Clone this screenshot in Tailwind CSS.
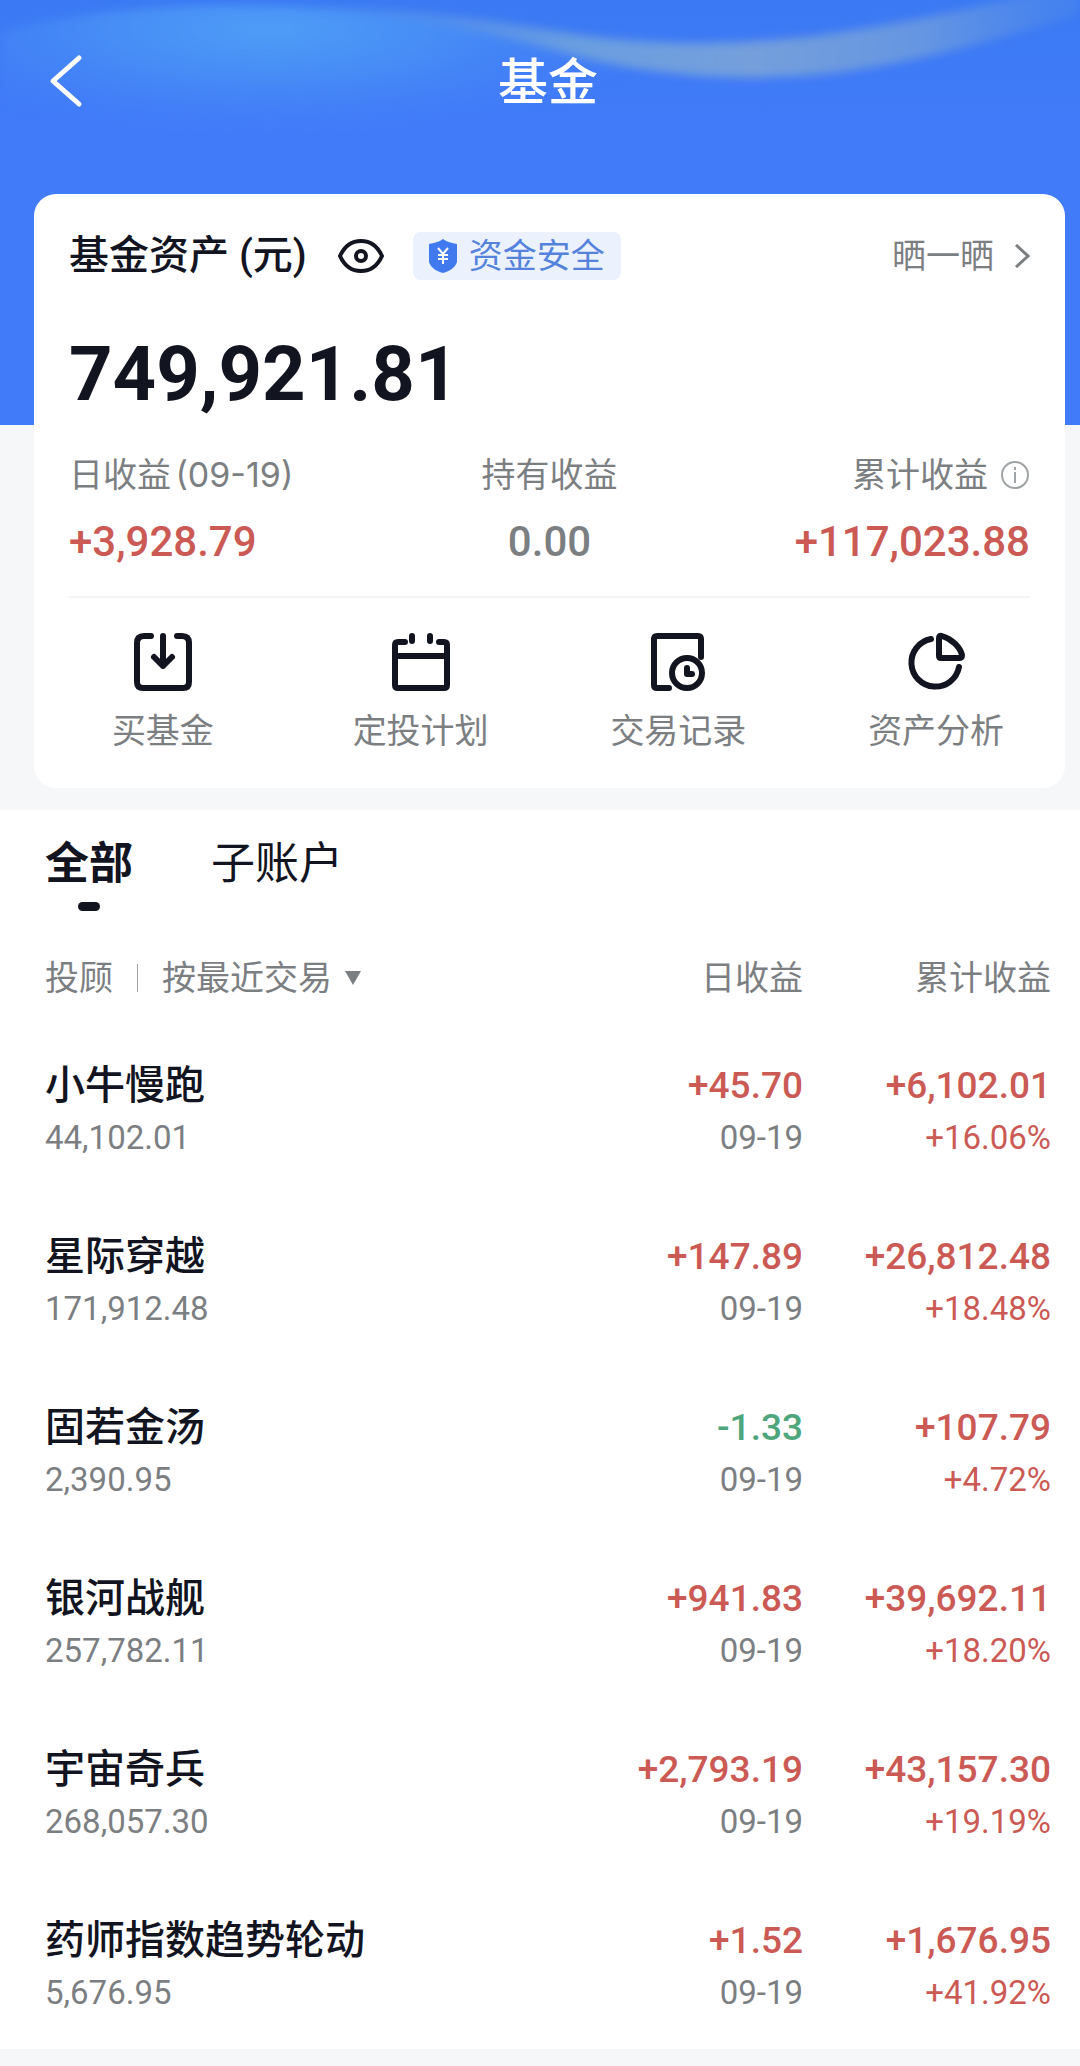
<!DOCTYPE html>
<html lang="zh-CN">
  <head>
    <meta charset="UTF-8" />
    <meta name="viewport" content="width=device-width, initial-scale=1.0" />
    <title>基金</title>
    <script src="https://cdn.jsdelivr.net/npm/@tailwindcss/browser@4"></script>
  </head>
  <body
    class="min-h-screen bg-[#f6f7f9] text-[#12141f] font-['Roboto','Noto_Sans_CJK_SC',sans-serif]"
  >
    <div class="relative">
      <!-- Fond bleu avec la vague -->
      <svg
        class="absolute inset-x-0 top-0 w-full h-[425px]"
        viewBox="0 0 1080 425"
        preserveAspectRatio="none"
        aria-hidden="true"
      >
        <defs>
          <linearGradient id="sky" x1="0" y1="0" x2="0" y2="1">
            <stop offset="0" stop-color="#3a79f3" />
            <stop offset="0.3" stop-color="#427bf9" />
            <stop offset="1" stop-color="#427bf9" />
          </linearGradient>
          <radialGradient id="glow">
            <stop offset="0" stop-color="#4e9df7" />
            <stop offset="0.4" stop-color="#4a93f6" stop-opacity="0.8" />
            <stop offset="1" stop-color="#4583f7" stop-opacity="0" />
          </radialGradient>
          <linearGradient id="band" x1="0" y1="0" x2="1" y2="0">
            <stop offset="0" stop-color="#5a97ea" stop-opacity="0" />
            <stop offset="0.35" stop-color="#6fa2de" stop-opacity="0.9" />
            <stop offset="0.58" stop-color="#759fdb" />
            <stop offset="0.8" stop-color="#6a99e0" stop-opacity="0.9" />
            <stop offset="1" stop-color="#4f8bea" stop-opacity="0.4" />
          </linearGradient>
          <clipPath id="under">
            <path
              d="M0 32C70 12 160 4 250 5C400 8 500 26 600 56C680 80 760 86 860 70L860 200H0Z"
            />
          </clipPath>
          <filter id="soft" x="-10%" y="-50%" width="120%" height="200%">
            <feGaussianBlur stdDeviation="5" />
          </filter>
        </defs>
        <rect width="1080" height="425" fill="url(#sky)" />
        <g filter="url(#soft)">
          <g clip-path="url(#under)">
            <ellipse cx="270" cy="30" rx="400" ry="105" fill="url(#glow)" />
          </g>
        </g>
        <path
          d="M300 4C430 8 500 22 580 35C660 46 740 46 830 34C920 20 1000 4 1080 -20V14C1010 36 930 60 840 72C760 82 680 78 600 62C520 42 430 14 300 8Z"
          fill="url(#band)"
          filter="url(#soft)"
        />
      </svg>

      <header class="relative flex items-center h-[162px] px-12">
        <button type="button" aria-label="返回" class="w-9 h-14">
          <svg viewBox="0 0 36 56" fill="none" stroke="#fff" stroke-width="5" stroke-linecap="round" stroke-linejoin="round">
            <path d="M31 5L5 28L31 51" />
          </svg>
        </button>
        <h1 class="flex-1 pt-1 text-center text-[50px] leading-[72px] font-medium text-white">
          基金
        </h1>
        <span class="w-5"></span>
      </header>

      <section class="relative mt-8 ml-[34px] mr-[15px] bg-white rounded-[22px]">
        <div class="px-[35px]">
          <div class="flex items-center pt-9">
            <h2 class="text-[40px] leading-[52px] font-medium">基金资产 (元)</h2>
            <button type="button" aria-label="隐藏金额" class="ml-[30px]">
              <svg class="w-12 h-9" viewBox="0 0 48 36" fill="none" stroke="#12141f" stroke-width="4" stroke-linejoin="round">
                <path d="M3 18C8 7 16 3 24 3S40 7 45 18C40 29 32 33 24 33S8 29 3 18Z" />
                <circle cx="24" cy="18" r="5" />
              </svg>
            </button>
            <div class="ml-7 flex items-center gap-3 h-12 px-4 rounded-lg bg-[#ebf1fd] text-[#5583dc]">
              <svg class="w-7 h-[34px]" viewBox="0 0 28 34">
                <path d="M14 0C18 3 23 4 28 5V23C26 29 21 32 14 34C7 32 2 29 0 23V5C5 4 10 3 14 0Z" fill="#417aee" />
                <path d="M9 9L14 15L19 9M14 15V25M9 16H19M9 20H19" fill="none" stroke="#fff" stroke-width="2" />
              </svg>
              <span class="text-[34px] leading-[48px]">资金安全</span>
            </div>
            <a href="#" class="ml-auto flex items-center gap-5 text-[#7c7f82]">
              <span class="text-[34px] leading-[48px]">晒一晒</span>
              <svg class="w-4 h-6" viewBox="0 0 16 24" fill="none" stroke="currentColor" stroke-width="3">
                <path d="M2 1L14 12L2 23" />
              </svg>
            </a>
          </div>

          <p class="pt-12 text-[76px] leading-[88px] font-bold">749,921.81</p>

          <dl class="grid grid-cols-3 pt-8 text-[34px] leading-[50px] text-[#7c7f82]">
            <div>
              <dt>日收益 <span class="-ml-1 font-['Inter']">(09-19)</span></dt>
              <dd class="pt-4 text-[42px] leading-[52px] font-medium text-[#cb5a54]">
                +3,928.79
              </dd>
            </div>
            <div class="text-center">
              <dt>持有收益</dt>
              <dd class="pt-4 text-[42px] leading-[52px] font-medium">0.00</dd>
            </div>
            <div class="text-right">
              <dt class="flex items-center justify-end gap-3">
                累计收益
                <svg class="w-[30px] h-[30px]" viewBox="0 0 30 30" fill="none" stroke="#a0a3a5" stroke-width="2">
                  <circle cx="15" cy="15" r="13" />
                  <path d="M15 12V23M15 7V10" />
                </svg>
              </dt>
              <dd class="pt-4 text-[42px] leading-[52px] font-medium text-[#cb5a54]">
                +117,023.88
              </dd>
            </div>
          </dl>
          <hr class="mt-7 border-t-2 border-[#f3f4f5]" />
        </div>

        <nav class="grid grid-cols-4 pt-[34px] pb-8 text-[34px] leading-[50px] text-[#7c7f82]">
          <a href="#" class="flex flex-col items-center gap-[14px]">
            <svg class="size-[60px]" viewBox="0 0 60 60" fill="none" stroke="#12141f" stroke-width="6" stroke-linecap="round" stroke-linejoin="round">
              <path d="M18 4H11Q4 4 4 11V50Q4 56 10 56H50Q56 56 56 50V11Q56 4 49 4H44" />
              <path d="M30 4V34M21 25L30 34L39 25" />
            </svg>
            买基金
          </a>
          <a href="#" class="flex flex-col items-center gap-[14px]">
            <svg class="size-[60px]" viewBox="0 0 60 60" fill="none" stroke="#12141f" stroke-width="6" stroke-linecap="round" stroke-linejoin="round">
              <path d="M14 10H7Q4 10 4 13V53Q4 56 7 56H53Q56 56 56 53V13Q56 10 53 10H48M4 24H56M21 4V9M39 4V9" />
            </svg>
            定投计划
          </a>
          <a href="#" class="flex flex-col items-center gap-[14px]">
            <svg class="size-[60px]" viewBox="0 0 60 60" fill="none" stroke="#12141f" stroke-width="6" stroke-linecap="round" stroke-linejoin="round">
              <path d="M21 56H9Q6 56 6 53V7Q6 4 9 4H50Q53 4 53 7V25" />
              <circle cx="39" cy="41" r="15" />
              <path d="M39 36V42H44" />
            </svg>
            交易记录
          </a>
          <a href="#" class="flex flex-col items-center gap-[14px]">
            <svg class="size-[60px]" viewBox="0 0 60 60" fill="none" stroke="#12141f" stroke-width="6" stroke-linecap="round" stroke-linejoin="round">
              <path d="M25 7A24 24 0 1 0 53 35" />
              <path d="M33 6Q33 3 36 4C46 7 54 15 56 23Q56 26 53 26H35Q33 26 33 24Z" />
            </svg>
            资产分析
          </a>
        </nav>
      </section>
    </div>

    <main class="mt-[22px] bg-white pl-[45px] pr-[29px]">
      <div role="tablist" class="flex gap-[78px] pt-6 text-[44px] leading-[60px]">
        <button type="button" role="tab" aria-selected="true" class="flex flex-col items-center font-bold">
          全部
          <span class="mt-2 w-[22px] h-[9px] rounded-full bg-[#12141f]"></span>
        </button>
        <button type="button" role="tab" aria-selected="false" class="self-start">
          子账户
        </button>
      </div>

      <table class="w-full table-fixed text-right">
        <thead class="text-[34px] leading-[50px] text-[#7c7f82]">
          <tr>
            <th class="pt-[42px] pb-5 text-left font-normal">
              <div class="flex items-center">
                <label for="sort">投顾</label>
                <span class="mx-6 w-px h-7 bg-[#a0a3a5]"></span>
                <select id="sort" class="appearance-none">
                  <option>按最近交易</option>
                </select>
                <svg class="ml-3 w-[18px] h-4" viewBox="0 0 18 16" fill="#7c7f82">
                  <path d="M1 1H17L9 15Z" />
                </svg>
              </div>
            </th>
            <th class="w-[300px] pt-[42px] pb-5 font-normal">日收益</th>
            <th class="w-[248px] pt-[42px] pb-5 font-normal">累计收益</th>
          </tr>
        </thead>
        <tbody id="funds"></tbody>
      </table>
    </main>

    <script>
      const funds = [
        ["小牛慢跑", "44,102.01", "+45.70", "+6,102.01", "+16.06%"],
        ["星际穿越", "171,912.48", "+147.89", "+26,812.48", "+18.48%"],
        ["固若金汤", "2,390.95", "-1.33", "+107.79", "+4.72%"],
        ["银河战舰", "257,782.11", "+941.83", "+39,692.11", "+18.20%"],
        ["宇宙奇兵", "268,057.30", "+2,793.19", "+43,157.30", "+19.19%"],
        ["药师指数趋势轮动", "5,676.95", "+1.52", "+1,676.95", "+41.92%"],
      ];

      // Rouge pour un gain, vert pour une perte
      const color = (value) =>
        value.startsWith("-") ? "text-[#4ea67c]" : "text-[#cb5a54]";

      document.getElementById("funds").innerHTML = funds
        .map(
          ([name, amount, day, total, rate]) => `
          <tr class="text-[33px] leading-[52px]">
            <td class="pt-[37px] pb-[30px] text-left">
              <p class="text-[40px] leading-[52px] font-medium">${name}</p>
              <p class="text-[#7c7f82]">${amount}</p>
            </td>
            <td class="pt-[37px] pb-[30px]">
              <p class="text-[37px] leading-[52px] font-medium ${color(day)}">${day}</p>
              <p class="text-[#7c7f82]">09-19</p>
            </td>
            <td class="pt-[37px] pb-[30px]">
              <p class="text-[37px] leading-[52px] font-medium ${color(total)}">${total}</p>
              <p class="${color(rate)}">${rate}</p>
            </td>
          </tr>`
        )
        .join("");
    </script>
  </body>
</html>
